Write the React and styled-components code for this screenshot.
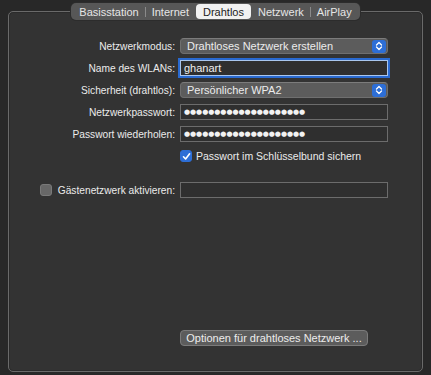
import { Fragment } from "react";
import styled, { createGlobalStyle } from "styled-components";

const Global = createGlobalStyle`
	html, body {
		margin: 0;
		background: #282828;
	}
	body {
		font-family: "Liberation Sans", Arial, sans-serif;
		font-size: 10.2px;
		color: #ebebeb;
	}
`;

const Page = styled.div`
	width: 431px;
	height: 375px;
	box-sizing: border-box;
	padding-top: 3px;
	display: flex;
	flex-direction: column;
	align-items: center;
`;

const Tabs = styled.div`
	position: relative;
	z-index: 1;
	display: flex;
	align-items: center;
	height: 17px;
	padding: 0 2px;
	margin-bottom: -9px;
	background: #575757;
	border-radius: 5px;
	box-shadow: 0 0 0 1px #2c2c2c;
`;

const Tab = styled.div`
	height: 15px;
	display: flex;
	align-items: center;
	padding: 0 ${(p) => (p.$active ? 7 : 6)}px;
	border-radius: 4px;
	font-size: 11px;
	color: ${(p) => (p.$active ? "#1c1c1c" : "#e6e6e6")};
	background: ${(p) => (p.$active ? "#f1f1f1" : "transparent")};
`;

const Sep = styled.div`
	width: 1px;
	height: 10px;
	background: #8a8a8a;
	visibility: ${(p) => (p.$hidden ? "hidden" : "visible")};
`;

const Panel = styled.div`
	align-self: stretch;
	margin: 0 8px;
	height: 361px;
	box-sizing: border-box;
	border: 1px solid #6a6a6a;
	border-radius: 5px;
	background: #333333;
	box-shadow: inset 0 0 0 1px #2b2b2b;
	padding: 23px 0 25px;
	display: flex;
	flex-direction: column;
`;

const Form = styled.div`
	display: grid;
	grid-template-columns: 166px 208px;
	column-gap: 5px;
	grid-auto-rows: 22px;
	align-items: center;
`;

const Label = styled.div`
	text-align: right;
	white-space: nowrap;
`;

const Popup = styled.div`
	height: 16px;
	box-sizing: border-box;
	border: 1px solid #6f6f6f;
	border-top-color: #7c7c7c;
	border-radius: 4px;
	background: #5c5c5c;
	display: flex;
	align-items: center;
	padding-left: 6px;
	padding-right: 1px;
	font-size: 11px;
	color: #ececec;
`;

const PopupText = styled.span`
	flex: 1;
`;

const Stepper = styled.div`
	width: 14px;
	height: 13px;
	border-radius: 3px;
	background: #2d6ed6;
	display: flex;
	align-items: center;
	justify-content: center;
`;

const Field = styled.div`
	height: 16px;
	box-sizing: border-box;
	border: 1px solid ${(p) => (p.$focus ? "#a9c6ee" : "#6c6c6c")};
	background: #2f2f2f;
	box-shadow: ${(p) => (p.$focus ? "0 0 0 2px #2a6ad0" : "none")};
	display: flex;
	align-items: center;
	padding-left: 3px;
	font-size: 11px;
	color: #f0f0f0;
`;

const Dots = styled.span`
	font-family: "DejaVu Sans", sans-serif;
	font-size: 7px;
	letter-spacing: -0.05px;
	color: #f2f2f2;
`;

const CheckRow = styled.div`
	display: flex;
	align-items: center;
	gap: 4px;
	white-space: nowrap;
	font-size: 10.5px;
`;

const GuestRow = styled.div`
	display: flex;
	align-items: center;
	justify-content: space-between;
	gap: 5px;
	padding-left: 31px;
	white-space: nowrap;
`;

const Box = styled.div`
	width: 12px;
	height: 12px;
	box-sizing: border-box;
	border-radius: 3px;
	border: 1px solid ${(p) => (p.$checked ? "#2d6ed6" : "#7a7a7a")};
	background: ${(p) => (p.$checked ? "#2d6ed6" : "#686868")};
	display: flex;
	align-items: center;
	justify-content: center;
`;

const Spacer = styled.div`
	height: ${(p) => p.$h}px;
`;

const Bottom = styled.div`
	margin-top: auto;
	padding-left: 171px;
`;

const Button = styled.div`
	width: 188px;
	height: 16px;
	box-sizing: border-box;
	border: 1px solid #7b7b7b;
	border-radius: 4px;
	background: #5c5c5c;
	display: flex;
	align-items: center;
	justify-content: center;
	font-size: 11px;
	color: #ececec;
`;

const Chevrons = () => (
	<svg width="8" height="10" viewBox="0 0 8 10">
		<path d="M1.5 4 L4 1.5 L6.5 4 M1.5 6 L4 8.5 L6.5 6" fill="none" stroke="#fff" strokeWidth="1.3" strokeLinecap="round" strokeLinejoin="round" />
	</svg>
);

const Check = () => (
	<svg width="9" height="9" viewBox="0 0 9 9">
		<path d="M1.5 4.8 L3.6 7 L7.6 1.8" fill="none" stroke="#fff" strokeWidth="1.6" strokeLinecap="round" strokeLinejoin="round" />
	</svg>
);

const tabs = ["Basisstation", "Internet", "Drahtlos", "Netzwerk", "AirPlay"];
const dots = "●".repeat(20);

const App = () => {
	const active = 2;
	return (
		<Page>
			<Global />
			<Tabs>
				{tabs.map((t, i) => (
					<Fragment key={t}>
						{i > 0 && <Sep $hidden={i === active || i === active + 1} />}
						<Tab $active={i === active}>{t}</Tab>
					</Fragment>
				))}
			</Tabs>
			<Panel>
				<Form>
					<Label>Netzwerkmodus:</Label>
					<Popup>
						<PopupText>Drahtloses Netzwerk erstellen</PopupText>
						<Stepper>
							<Chevrons />
						</Stepper>
					</Popup>
					<Label>Name des WLANs:</Label>
					<Field $focus>ghanart</Field>
					<Label>Sicherheit (drahtlos):</Label>
					<Popup>
						<PopupText>Persönlicher WPA2</PopupText>
						<Stepper>
							<Chevrons />
						</Stepper>
					</Popup>
					<Label>Netzwerkpasswort:</Label>
					<Field>
						<Dots>{dots}</Dots>
					</Field>
					<Label>Passwort wiederholen:</Label>
					<Field>
						<Dots>{dots}</Dots>
					</Field>
					<div />
					<CheckRow>
						<Box $checked>
							<Check />
						</Box>
						Passwort im Schlüsselbund sichern
					</CheckRow>
				</Form>
				<Spacer $h={12} />
				<Form>
					<GuestRow>
						<Box />
						Gästenetzwerk aktivieren:
					</GuestRow>
					<Field />
				</Form>
				<Bottom>
					<Button>Optionen für drahtloses Netzwerk ...</Button>
				</Bottom>
			</Panel>
		</Page>
	);
};

export default App;
